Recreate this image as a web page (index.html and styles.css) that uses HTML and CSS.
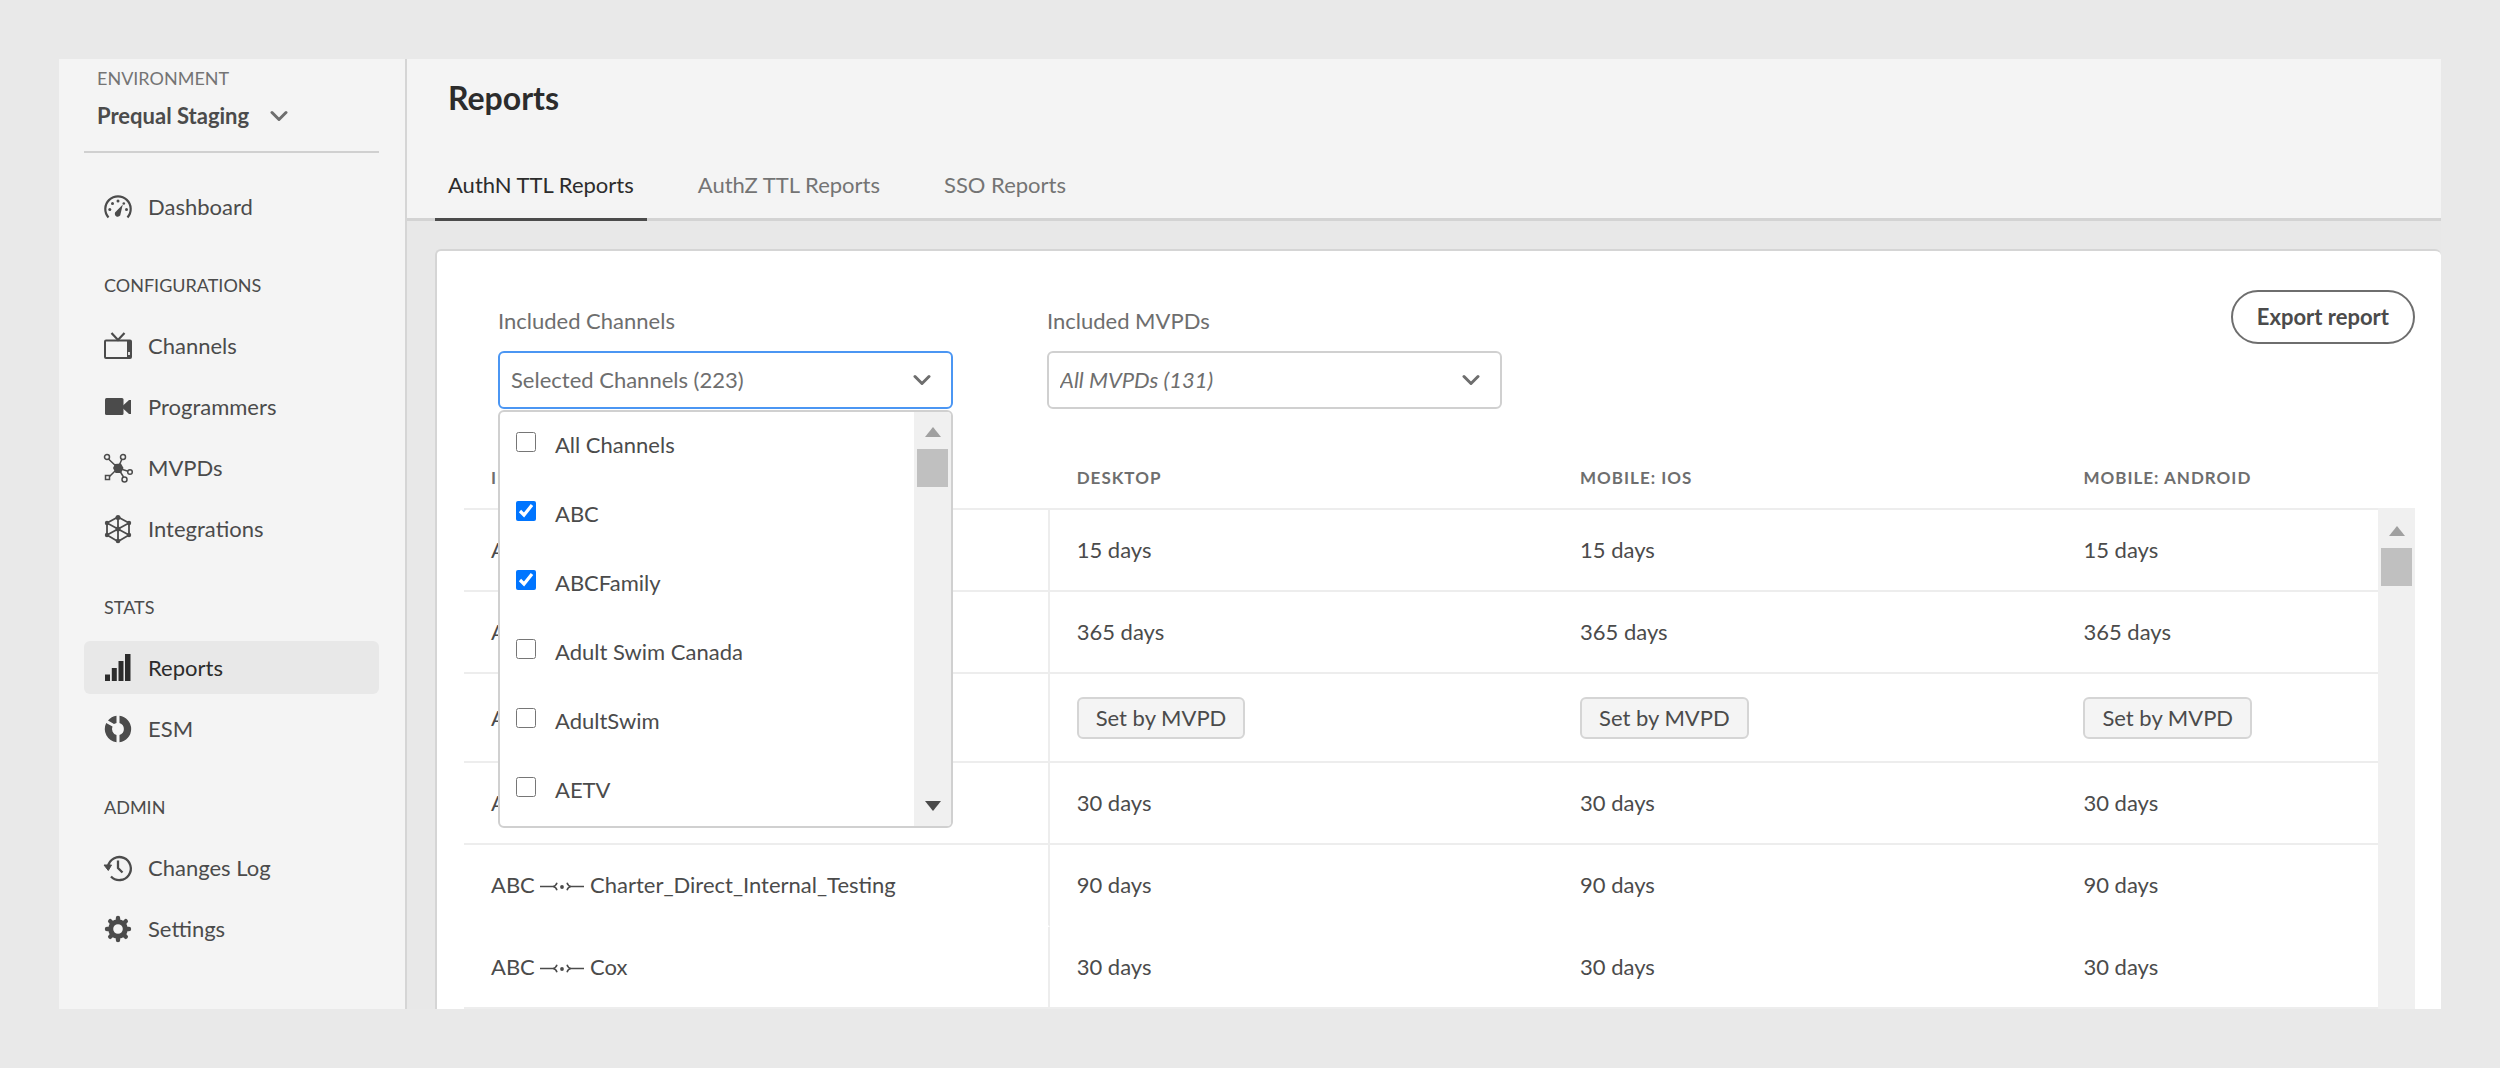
FILE: index.html
```html
<!DOCTYPE html>
<html lang="en">
<head>
<meta charset="utf-8">
<title>Reports</title>
<link rel="stylesheet" href="styles.css">
</head>
<body>
<svg class="defs" aria-hidden="true">
  <symbol id="chevron" viewBox="0 0 18 12"><path d="M2 2.500l7 7 7-7" fill="none" stroke="currentColor" stroke-width="3" stroke-linecap="round" stroke-linejoin="round"/></symbol>
  <symbol id="link" viewBox="0 0 44 14"><path d="M0 7.500h14M30 7.500h14M17 3.800q-1 3.200-4 3.700 3 .5 4 3.700M27 3.800q1 3.200 4 3.700-3 .5-4 3.700" fill="none" stroke="currentColor" stroke-width="1.500"/><circle cx="22" cy="8" r="1.900" fill="currentColor"/></symbol>
</svg>
<div class="app">
  <aside class="sidebar">
    <div class="env">
      <label class="env-label" for="env">ENVIRONMENT</label>
      <div class="env-pick">
        <select id="env" class="env-select"><option>Prequal Staging</option></select>
        <svg class="chevron"><use href="#chevron"/></svg>
      </div>
    </div>
    <nav class="nav">
      <a class="nav-item" href="#"><svg class="icon" viewBox="0 0 28 28"><path d="M4.500 24.500A12.700 12.700 0 1 1 23.500 24.500" fill="none" stroke="currentColor" stroke-width="2.200"/><g fill="currentColor"><circle cx="5.800" cy="16.500" r="1.500"/><circle cx="8.500" cy="10.500" r="1.500"/><circle cx="14" cy="8" r="1.500"/><circle cx="19.800" cy="10.500" r="1.300"/><circle cx="22.500" cy="16.500" r="1.500"/><path d="M18.800 11.500L12 18.500a2.900 2.900 0 1 0 4.600 2.300z"/></g></svg>Dashboard</a>
      <h2 class="nav-head">CONFIGURATIONS</h2>
      <a class="nav-item" href="#"><svg class="icon" viewBox="0 0 28 28"><path d="M7.500 1l6.500 7 6.500-7" fill="none" stroke="currentColor" stroke-width="2.200"/><rect x="1" y="8.500" width="26" height="17.500" rx="1" fill="none" stroke="currentColor" stroke-width="2"/><path d="M23 8.500h4V26h-4z" fill="currentColor"/><path d="M24 20h2v3h-2z" fill="#ddd"/></svg>Channels</a>
      <a class="nav-item" href="#"><svg class="icon" viewBox="0 0 28 28"><rect x="1" y="5" width="18.500" height="17" rx="1.500" fill="currentColor"/><path d="M19 12.500l6-5.500h2v14h-2l-6-5.500z" fill="currentColor"/></svg>Programmers</a>
      <a class="nav-item" href="#"><svg class="icon" viewBox="0 0 28 28"><g fill="none" stroke="currentColor" stroke-width="1.500"><path d="M4.500 5L14 14l4-9M5.500 22.500L14 14l10 3.300M14 14l5.500 9"/><g fill="#f4f4f4"><circle cx="3" cy="3" r="2.500"/><circle cx="19" cy="3" r="2.500"/><circle cx="26" cy="18" r="2.300"/><circle cx="20.500" cy="25.500" r="2.500"/><path d="M1.500 21.500h4v4h-4z"/></g></g><path d="M11 10l6-.5 2.500 4.500-2.500 5h-5.500L9 14z" fill="currentColor"/></svg>MVPDs</a>
      <a class="nav-item" href="#"><svg class="icon" viewBox="0 0 28 28"><path d="M14 2l11 6v12l-11 6.500L3 20V8zM14 2v24M3 8l22 12M25 8L3 20" fill="none" stroke="currentColor" stroke-width="1.800"/><g fill="currentColor"><circle cx="14" cy="2.500" r="2.500"/><circle cx="25" cy="8" r="2.200"/><circle cx="25" cy="20" r="2.200"/><circle cx="14" cy="26" r="2.300"/><circle cx="3" cy="20" r="2.200"/><circle cx="3" cy="8" r="2.200"/><circle cx="14" cy="14" r="2.500"/></g></svg>Integrations</a>
      <h2 class="nav-head">STATS</h2>
      <a class="nav-item nav-item-on" href="#" aria-current="page"><svg class="icon" viewBox="0 0 28 28"><path d="M1 20.500h5V27H1zM7.800 14h5v13h-5zM14.500 7h5v20h-5zM21 0h5.500v27H21z" fill="currentColor"/></svg>Reports</a>
      <a class="nav-item" href="#"><svg class="icon" viewBox="0 0 28 28"><path d="M15.500.8a13.300 13.300 0 0 1 0 26.400V20a6.300 6.300 0 0 0 0-12zM12.500 27.200A13.300 13.300 0 0 1 2.200 8L8.500 11.500A6.300 6.300 0 0 0 12.500 20zM4 5.500A13 13 0 0 1 12.500.8V8L10 9z" fill="currentColor"/></svg>ESM</a>
      <h2 class="nav-head">ADMIN</h2>
      <a class="nav-item" href="#"><svg class="icon" viewBox="0 0 28 28"><path d="M4 12.500A11.500 11.500 0 1 1 7 22.500" fill="none" stroke="currentColor" stroke-width="2.300"/><path d="M0 11h7.500l-3.200 5.500z" fill="currentColor" stroke="currentColor" stroke-linejoin="round"/><path d="M14 6.500V14l4.500 4.500" fill="none" stroke="currentColor" stroke-width="2.300"/></svg>Changes Log</a>
      <a class="nav-item" href="#"><svg class="icon" viewBox="0 0 28 28"><circle cx="14" cy="14" r="7.300" fill="none" stroke="currentColor" stroke-width="5"/><g stroke="currentColor" stroke-width="4.400" stroke-linecap="round"><path d="M14 3v2M14 23v2M3 14h2M23 14h2M6.200 6.200l1.500 1.500M20.300 20.300l1.500 1.500M6.200 21.800l1.500-1.500M20.300 7.700l1.500-1.500"/></g></svg>Settings</a>
    </nav>
  </aside>
  <main class="main">
    <header class="header">
      <h1 class="title">Reports</h1>
      <nav class="tabs">
        <a class="tab tab-on" href="#" aria-current="page">AuthN TTL Reports</a>
        <a class="tab" href="#">AuthZ TTL Reports</a>
        <a class="tab" href="#">SSO Reports</a>
      </nav>
    </header>
    <section class="panel">
      <div class="filters">
        <div class="field">
          <label class="field-label" for="channels">Included Channels</label>
          <div class="select-box">
            <select id="channels" class="select select-open"><option>Selected Channels (223)</option></select>
            <svg class="chevron select-chevron"><use href="#chevron"/></svg>
            <div class="menu">
              <div class="menu-list">
                <label class="option"><input type="checkbox" class="check">All Channels</label>
                <label class="option"><input type="checkbox" class="check" checked>ABC</label>
                <label class="option"><input type="checkbox" class="check" checked>ABCFamily</label>
                <label class="option"><input type="checkbox" class="check">Adult Swim Canada</label>
                <label class="option"><input type="checkbox" class="check">AdultSwim</label>
                <label class="option"><input type="checkbox" class="check">AETV</label>
              </div>
              <div class="track" aria-hidden="true"><span class="arrow-up"></span><span class="thumb"></span><span class="arrow-down"></span></div>
            </div>
          </div>
        </div>
        <div class="field">
          <label class="field-label" for="mvpds">Included MVPDs</label>
          <div class="select-box">
            <select id="mvpds" class="select select-all"><option>All MVPDs (131)</option></select>
            <svg class="chevron select-chevron"><use href="#chevron"/></svg>
          </div>
        </div>
        <button type="button" class="export">Export report</button>
      </div>
      <div class="report">
        <table class="table">
          <colgroup><col class="col-name"><col class="col-ttl"><col class="col-ttl"><col></colgroup>
          <thead>
            <tr><th>INTEGRATION</th><th>DESKTOP</th><th>MOBILE: IOS</th><th>MOBILE: ANDROID</th></tr>
          </thead>
          <tbody>
            <tr><td>ABC</td><td>15 days</td><td>15 days</td><td>15 days</td></tr>
            <tr><td>ABC</td><td>365 days</td><td>365 days</td><td>365 days</td></tr>
            <tr class="row-tall"><td>ABC</td><td><span class="badge">Set by MVPD</span></td><td><span class="badge">Set by MVPD</span></td><td><span class="badge">Set by MVPD</span></td></tr>
            <tr><td>ABC</td><td>30 days</td><td>30 days</td><td>30 days</td></tr>
            <tr class="row-open"><td>ABC <svg class="link"><use href="#link"/></svg> Charter_Direct_Internal_Testing</td><td>90 days</td><td>90 days</td><td>90 days</td></tr>
            <tr><td>ABC <svg class="link"><use href="#link"/></svg> Cox</td><td>30 days</td><td>30 days</td><td>30 days</td></tr>
          </tbody>
        </table>
        <div class="track track-table" aria-hidden="true"><span class="arrow-up"></span><span class="thumb"></span></div>
      </div>
    </section>
  </main>
</div>
</body>
</html>
```
FILE: styles.css
```css
* { box-sizing: border-box; }

body {
  margin: 0;
  padding: 59px;
  background: #e9e9e9;
  color: #4b4b4b;
  font: 22px/28px Lato, "Noto Sans", sans-serif;
}

h1, h2 { margin: 0; }
a { color: inherit; text-decoration: none; }
.defs { display: none; }

.app { display: flex; }

/* Sidebar */
.sidebar {
  flex: none;
  width: 348px;
  padding: 7px 26px 0 25px;
  background: #f4f4f4;
  border-right: 2px solid #d5d5d5;
}

.env {
  padding: 0 13px 21px;
  border-bottom: 2px solid #d0d0d0;
}

.env-label {
  display: block;
  font-size: 18px;
  line-height: 24px;
  color: #747474;
}

.env-pick {
  display: flex;
  align-items: center;
  gap: 20px;
  margin-top: 12px;
}

.env-select {
  appearance: none;
  padding: 0;
  border: 0;
  background: none;
  color: #4b4b4b;
  font: inherit;
  font-weight: 700;
}

.chevron {
  width: 18px;
  height: 12px;
  color: #6e6e6e;
}

.nav {
  display: flex;
  flex-direction: column;
  gap: 8px;
  padding-top: 27px;
}

.nav-item {
  display: flex;
  align-items: center;
  gap: 16px;
  height: 53px;
  padding: 0 20px;
  border-radius: 6px;
}

.nav-item-on {
  background: #e8e8e8;
  color: #2c2c2c;
}

.icon {
  flex: none;
  width: 28px;
  height: 28px;
  overflow: visible;
}

.nav-head {
  margin: 32px 20px 14px;
  font-size: 18px;
  line-height: 24px;
  font-weight: 400;
}

/* Page header */
.main {
  flex: 1;
  min-width: 0;
  display: flex;
  flex-direction: column;
  background: #e8e8e8;
}

.header {
  padding: 19px 28px 0;
  background: #f4f4f4;
  border-bottom: 3px solid #d3d3d3;
}

.title {
  padding-left: 13px;
  font-size: 32px;
  line-height: 40px;
  font-weight: 700;
  color: #2c2c2c;
}

.tabs {
  display: flex;
  gap: 38px;
  margin: 32px 0 -3px;
}

.tab {
  padding: 21px 13px 19px;
  line-height: 28px;
  color: #747474;
  border-bottom: 3px solid transparent;
}

.tab-on {
  color: #2c2c2c;
  border-bottom-color: #4b4b4b;
}

/* Report panel */
.panel {
  flex: 1;
  margin: 28px 0 0 28px;
  padding: 39px 26px 0 27px;
  background: #fff;
  border: solid #d5d5d5;
  border-width: 2px 0 0 2px;
  border-radius: 6px 6px 0 0;
}

.filters {
  display: flex;
  align-items: flex-start;
  gap: 94px;
  padding-left: 34px;
}

.field {
  flex: 0 1 455px;
  padding-top: 17px;
}

.field-label {
  display: block;
  color: #6e6e6e;
}

.select-box {
  position: relative;
  display: flex;
  align-items: center;
  margin-top: 16px;
}

.select {
  appearance: none;
  width: 100%;
  height: 58px;
  padding: 0 48px 0 11px;
  border: 2px solid #d0d0d0;
  border-radius: 6px;
  background: #fff;
  color: #6e6e6e;
  font: inherit;
}

.select-open { border-color: #4b96f3; }
.select-all { font-style: italic; }

.select-chevron {
  position: absolute;
  right: 22px;
}

.menu {
  position: absolute;
  top: 100%;
  left: 0;
  right: 0;
  display: flex;
  margin-top: 1px;
  border: 2px solid #d0d0d0;
  border-radius: 6px;
  background: #fff;
  overflow: hidden;
}

.menu-list { flex: 1; }

.option {
  display: flex;
  align-items: center;
  gap: 19px;
  height: 69px;
  padding: 0 0 3px 16px;
}

.check {
  width: 20px;
  height: 20px;
  margin: 0 0 6px;
}

.track {
  flex: none;
  display: flex;
  flex-direction: column;
  align-items: center;
  width: 37px;
  padding: 15px 0;
  background: #f0f0f0;
}

.track-table {
  margin-top: 62px;
  padding-top: 18px;
}

.thumb {
  width: 31px;
  height: 38px;
  margin-top: 12px;
  background: #c0c0c0;
}

.arrow-up, .arrow-down {
  border: solid transparent;
  border-width: 0 8px;
}

.arrow-up { border-bottom: 10px solid #a0a0a0; }

.arrow-down {
  margin-top: auto;
  border-top: 10px solid #4b4b4b;
}

.export {
  height: 54px;
  margin-left: auto;
  padding: 0 24px;
  border: 2px solid #6e6e6e;
  border-radius: 27px;
  background: none;
  color: #4b4b4b;
  font: inherit;
  font-weight: 700;
}

/* Table */
.report {
  display: flex;
  margin-top: 37px;
}

.table {
  flex: 1;
  table-layout: fixed;
  border-collapse: separate;
  border-spacing: 0;
}

.col-name { width: 30.6%; }
.col-ttl { width: 26.3%; }

.table th, .table td {
  padding: 0 0 0 27px;
  border-bottom: 2px solid #ededed;
  text-align: left;
}

.table th {
  height: 64px;
  padding-top: 2px;
  font-size: 17px;
  font-weight: 700;
  letter-spacing: 1px;
  color: #6e6e6e;
}

.table td { height: 82px; }
.table .row-tall td { height: 89px; }
.table .row-open td { border-bottom-color: #fff; }
.table td:first-child { border-right: 2px solid #ededed; }

.link {
  width: 44px;
  height: 14px;
}

.badge {
  display: inline-block;
  padding: 5px 17px;
  border: 2px solid #d5d5d5;
  border-radius: 6px;
  background: #f4f4f4;
}
```
